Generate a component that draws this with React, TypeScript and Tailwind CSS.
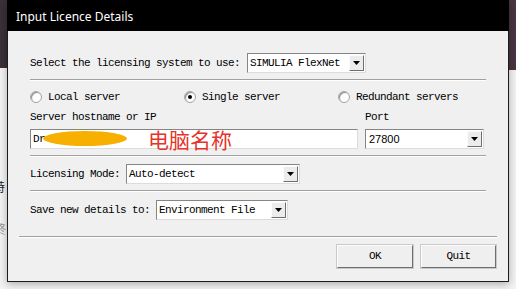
import React from "react";

const mono = "font-['Liberation_Mono',monospace] text-[11px] tracking-[-0.6px] text-black";

function Arrow() {
  return (
    <span className="m-[1px] flex w-[15px] items-center justify-center border border-[#fbfbfb] border-r-[#6f6f6f] border-b-[#6f6f6f] bg-[#ececec]">
      <svg width="7" height="4" viewBox="0 0 7 4">
        <path d="M0 0h7L3.5 4z" fill="#000" />
      </svg>
    </span>
  );
}

function Combo({ value, width, sans }: { value: string; width: string; sans?: boolean }) {
  return (
    <div className={`flex h-[20px] ${width} items-stretch border border-[#dcdcdc] border-t-[#858585] border-l-[#858585] bg-white`}>
      <span
        className={
          sans
            ? "flex-1 pl-[3px] font-['Liberation_Sans',sans-serif] text-[11px] leading-[18px] text-black"
            : `flex-1 pl-[2px] leading-[18px] ${mono}`
        }
      >
        {value}
      </span>
      <Arrow />
    </div>
  );
}

function Radio({ checked, label }: { checked?: boolean; label: string }) {
  return (
    <div className="flex h-[16px] items-center gap-[6px]">
      <span className="flex h-[12px] w-[12px] items-center justify-center rounded-full border border-[#a5a5a5] bg-white shadow-[inset_1px_1px_1px_#8a8a8a]">
        {checked && <span className="h-[4px] w-[4px] rounded-full bg-black" />}
      </span>
      <span className={mono}>{label}</span>
    </div>
  );
}

function Separator() {
  return <div className="h-[2px] border-t border-[#a0a0a0] bg-white" />;
}

function Button({ label, width }: { label: string; width: string }) {
  return (
    <button
      className={`flex h-[23px] ${width} items-center justify-center border border-[#fdfdfd] border-r-[#6e6e6e] border-b-[#6e6e6e] bg-[#efefef] shadow-[0_0_0_1px_#c9c9c9] ${mono}`}
    >
      {label}
    </button>
  );
}

export default function App() {
  return (
    <div className="relative h-[289px] w-[516px] overflow-hidden bg-[#f3f3f3]">
      {/* windows behind the dialog */}
      <div className="absolute left-0 top-0 h-[68px] w-[8px] bg-[#3a3038]" />
      <div className="absolute right-0 top-0 h-[70px] w-[8px] bg-[#4a3541]" />
      <span className="absolute left-[-7px] top-[178px] font-['Noto_Sans_CJK_SC',sans-serif] text-[12px] text-[#222]">特</span>
      <span className="absolute left-[-6px] top-[220px] font-['Noto_Sans_CJK_SC',sans-serif] text-[12px] text-[#999]">终</span>

      {/* dialog */}
      <div className="relative ml-[7px] w-[502px] shadow-[0_2px_8px_rgba(0,0,0,0.3)]">
        <div className="h-[31px] bg-black pl-[9px] pt-[1px] font-['Noto_Sans',sans-serif] text-[12px] leading-[31px] text-white">
          Input Licence Details
        </div>
        <div className="border-x border-b border-[#1c1c1c] bg-[#f0f0f0] pb-[13px]">
          <div className="px-[22px] pt-[22px]">
            <div className="flex h-[20px] items-center gap-[7px]">
              <span className={mono}>Select the licensing system to use:</span>
              <Combo value="SIMULIA FlexNet" width="w-[119px]" />
            </div>
            <div className="mt-[6px]">
              <Separator />
            </div>

            <div className="mt-[8px] grid grid-cols-[154px_154px_1fr]">
              <Radio label="Local server" />
              <Radio label="Single server" checked />
              <Radio label="Redundant servers" />
            </div>

            <div className="mt-[5px] flex gap-[7px]">
              <div className="w-[328px]">
                <div className={`h-[14px] leading-[14px] ${mono}`}>Server hostname or IP</div>
                <div className="relative mt-[5px] flex h-[20px] items-center border border-[#dcdcdc] border-t-[#858585] border-l-[#858585] bg-white">
                  <span className={`pl-[2px] leading-[18px] ${mono}`}>Dr</span>
                  <span className="absolute left-[12px] top-[1px] h-[15px] w-[84px] rounded-[50%] bg-[#f7b000]" />
                  <span className="absolute left-[117px] top-[-1px] font-['Noto_Sans_CJK_SC',sans-serif] text-[21px] leading-none text-[#e6332a]">
                    电脑名称
                  </span>
                </div>
              </div>
              <div>
                <div className={`h-[14px] leading-[14px] ${mono}`}>Port</div>
                <div className="mt-[5px]">
                  <Combo value="27800" width="w-[119px]" sans />
                </div>
              </div>
            </div>

            <div className="mt-[6px]">
              <Separator />
            </div>

            <div className="mt-[7px] flex h-[20px] items-center gap-[6px]">
              <span className={mono}>Licensing Mode:</span>
              <Combo value="Auto-detect" width="w-[174px]" />
            </div>

            <div className="mt-[6px]">
              <Separator />
            </div>

            <div className="mt-[8px] flex h-[20px] items-center gap-[6px]">
              <span className={mono}>Save new details to:</span>
              <Combo value="Environment File" width="w-[132px]" />
            </div>
          </div>

          <div className="mt-[16px] px-[11px]">
            <Separator />
            <div className="mt-[7px] flex justify-end gap-[8px] pr-[1px]">
              <Button label="OK" width="w-[76px]" />
              <Button label="Quit" width="w-[75px]" />
            </div>
          </div>
        </div>
      </div>
    </div>
  );
}
